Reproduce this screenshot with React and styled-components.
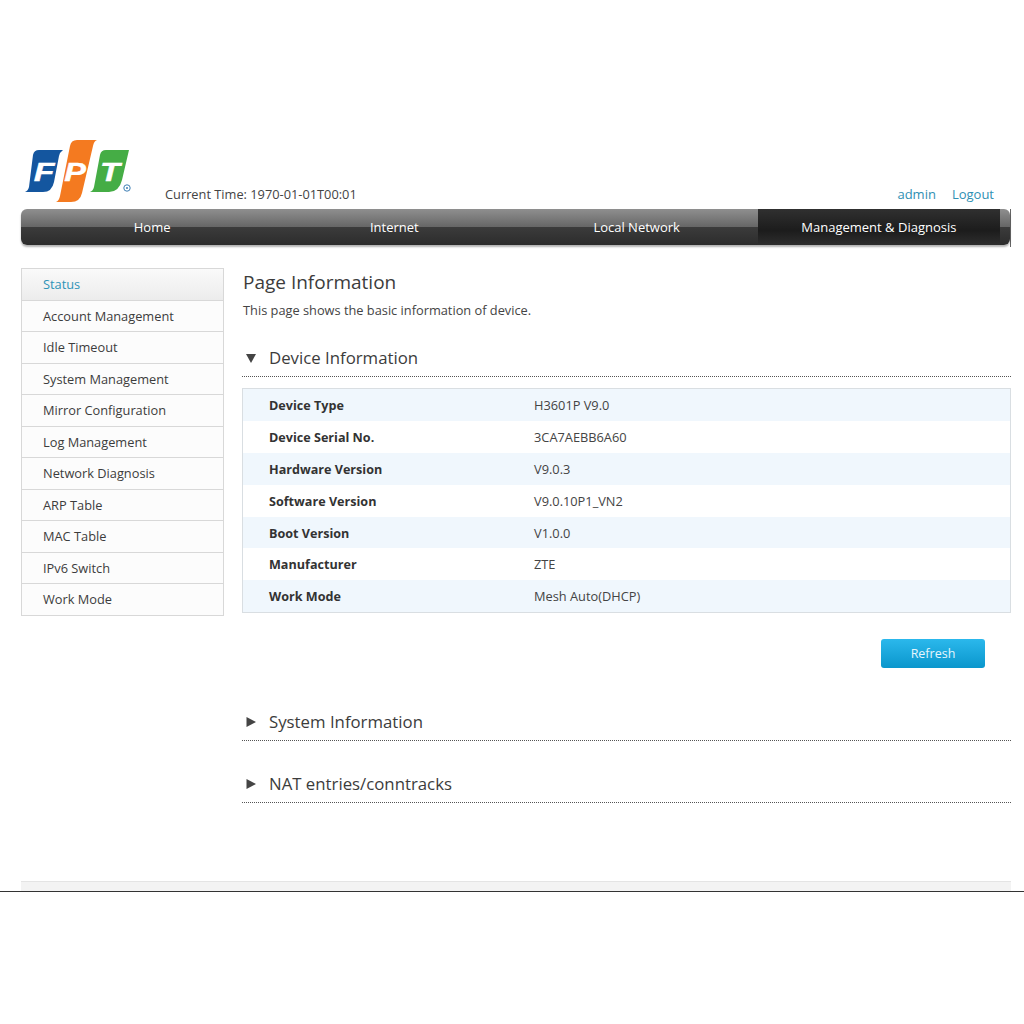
import React from 'react';
import styled, { createGlobalStyle } from 'styled-components';

const GlobalStyle = createGlobalStyle`
    html, body {
        margin: 0;
        padding: 0;
        background: #fff;
    }
    body {
        font-family: "Open Sans", "Noto Sans", "Liberation Sans", sans-serif;
        color: #3c3c3c;
    }
`

const Page = styled.div`
    width: 1024px;
    height: 1024px;
    padding-top: 139px;
    box-sizing: border-box;
    overflow: hidden;
`
const Wrap = styled.div`
    margin: 0 13px 0 21px;
`
const Header = styled.header`
    display: flex;
    align-items: flex-end;
    height: 70px;
`
const Logo = styled.svg`
    width: 112px;
    height: 66px;
    margin: 0 0 5px 3px;
    flex: none;
`
const Time = styled.div`
    margin: 0 0 6px 29px;
    font-size: 12.8px;
    line-height: 18px;
    color: #444;
`
const UserLinks = styled.div`
    margin: 0 17px 6px auto;
    display: flex;
    gap: 16px;
    font-size: 13px;
    line-height: 18px;
    color: #2f8fb3;
`
const NavBar = styled.div`
    height: 38px;
    border-right: 1px solid #666;
    box-sizing: border-box;
`
const Nav = styled.nav`
    display: grid;
    grid-template-columns: repeat(4, 242.25px);
    height: 36px;
    padding: 0 10px;
    border-radius: 6px;
    overflow: hidden;
    background: linear-gradient(#8f8f8f 0, #666 50%, #3b3b3b 51%, #2c2c2c 100%);
    box-shadow: 0 2px 2px rgba(0, 0, 0, 0.3);
`
const NavItem = styled.div`
    display: flex;
    align-items: center;
    justify-content: center;
    font-size: 13px;
    color: #fff;
    background: ${props => props.$active ? 'linear-gradient(#303030 0, #1c1c1c 60%, #2e2e2e 100%)' : 'transparent'};
`
const Main = styled.div`
    display: flex;
    align-items: flex-start;
    gap: 18px;
    margin-top: 21px;
`
const Sidebar = styled.ul`
    list-style: none;
    margin: 0;
    padding: 0;
    width: 203px;
    flex: none;
    box-sizing: border-box;
    border: 1px solid #d8d8d8;
    border-bottom: none;
`
const SideItem = styled.li`
    height: 31.55px;
    box-sizing: border-box;
    padding: 0 0 0.6px 21px;
    display: flex;
    align-items: center;
    font-size: 12.8px;
    border-bottom: 1px solid #d8d8d8;
    color: ${props => props.$active ? '#2f94b8' : '#3c3c3c'};
    background: ${props => props.$active ? 'linear-gradient(#fafafa, #ececec)' : '#fcfcfc'};
`
const Content = styled.main`
    flex: 1;
    min-width: 0;
`
const Title = styled.h1`
    margin: 0;
    padding-left: 1px;
    font-size: 19px;
    font-weight: 400;
    line-height: 28px;
    color: #3c3c3c;
`
const Description = styled.p`
    margin: 5px 0 0;
    padding-left: 1px;
    font-size: 12.8px;
    line-height: 18px;
    color: #444;
`
const Section = styled.div`
    display: flex;
    align-items: center;
    height: 38px;
    box-sizing: border-box;
    margin-top: ${props => props.$top}px;
    border-bottom: 1px dotted #555;
    font-size: 16.8px;
    color: #3c3c3c;
`
const Arrow = styled.svg`
    width: 12px;
    height: 12px;
    margin: 0 12px 0 3px;
    flex: none;
`
const InfoTable = styled.div`
    margin-top: 11px;
    border: 1px solid #d9dee2;
`
const Row = styled.div`
    display: flex;
    align-items: baseline;
    height: 31.9px;
    line-height: 33px;
    padding-left: 26px;
    font-size: 12.6px;
    background: ${props => props.$odd ? '#f0f7fd' : '#fff'};
`
const Label = styled.div`
    width: 265px;
    flex: none;
    font-weight: 700;
    color: #333;
`
const Value = styled.div`
    font-size: 12.8px;
    color: #444;
`
const Actions = styled.div`
    display: flex;
    justify-content: flex-end;
    margin-top: 26px;
    padding-right: 26px;
`
const Refresh = styled.button`
    width: 104px;
    height: 29px;
    padding: 0;
    border: none;
    border-radius: 3px;
    font-family: inherit;
    font-size: 12.5px;
    color: #e6f6fd;
    background: linear-gradient(#2bb8ec, #0a96cc);
`
const Footer = styled.div`
    height: 10px;
    margin-top: 78px;
    box-sizing: border-box;
    background: #f3f3f3;
    border-top: 1px solid #e4e4e4;
`
const Rule = styled.div`
    height: 1px;
    background: #333;
`

const menu = [
    'Status',
    'Account Management',
    'Idle Timeout',
    'System Management',
    'Mirror Configuration',
    'Log Management',
    'Network Diagnosis',
    'ARP Table',
    'MAC Table',
    'IPv6 Switch',
    'Work Mode'
]

const rows = [
    ['Device Type', 'H3601P V9.0'],
    ['Device Serial No.', '3CA7AEBB6A60'],
    ['Hardware Version', 'V9.0.3'],
    ['Software Version', 'V9.0.10P1_VN2'],
    ['Boot Version', 'V1.0.0'],
    ['Manufacturer', 'ZTE'],
    ['Work Mode', 'Mesh Auto(DHCP)']
]

const tabs = ['Home', 'Internet', 'Local Network', 'Management & Diagnosis']

function FptLogo() {
    const letter = {
        fill: '#fff',
        stroke: '#fff',
        strokeWidth: 0.4,
        fontFamily: '"Liberation Sans", sans-serif',
        fontWeight: 700,
        fontStyle: 'italic',
        fontSize: 26,
        textAnchor: 'middle'
    }
    return (
        <Logo viewBox="0 0 112 66">
            <path d="M9 17 Q10 12 15 12 L39 12 Q36 14 35 18 L30 44 Q28 54 19 54 L1 54 Q4 53 5 49 Z" fill="#14569f" />
            <path d="M46 8 Q47 2 53 2 L73 2 Q70 3 69 8 L58 55 Q56 64 47 64 L32 64 Q35 63 36 58 Z" fill="#f47a20" />
            <path d="M76 17 Q77 12 82 12 L105 12 L98 42 Q95 54 85 54 L66 54 Q69 53 70 49 Z" fill="#45ad45" />
            <text transform="translate(20 43) scale(1.3 1)" style={letter}>F</text>
            <text transform="translate(51 43) scale(1.25 1)" style={letter}>P</text>
            <text transform="translate(86 43) scale(1.25 1)" style={letter}>T</text>
            <circle cx="103" cy="50" r="3.2" fill="none" stroke="#3f7fb5" strokeWidth="1" />
            <circle cx="103" cy="50" r="1" fill="#3f7fb5" />
        </Logo>
    )
}

function Caret({ open }) {
    return (
        <Arrow viewBox="0 0 12 12">
            {open
                ? <path d="M1 2 L11 2 L6 11 Z" fill="#444" />
                : <path d="M1.5 1 L11 6 L1.5 11 Z" fill="#444" />}
        </Arrow>
    )
}

export default function App() {
    return (
        <Page>
            <GlobalStyle />
            <Wrap>
                <Header>
                    <FptLogo />
                    <Time>Current Time: 1970-01-01T00:01</Time>
                    <UserLinks>
                        <span>admin</span>
                        <span>Logout</span>
                    </UserLinks>
                </Header>
                <NavBar>
                    <Nav>
                        {tabs.map((tab, i) => (
                            <NavItem key={tab} $active={i === 3}>{tab}</NavItem>
                        ))}
                    </Nav>
                </NavBar>
                <Main>
                    <Sidebar>
                        {menu.map((item, i) => (
                            <SideItem key={item} $active={i === 0}>{item}</SideItem>
                        ))}
                    </Sidebar>
                    <Content>
                        <Title>Page Information</Title>
                        <Description>This page shows the basic information of device.</Description>
                        <Section $top={20}><Caret open />Device Information</Section>
                        <InfoTable>
                            {rows.map(([label, value], i) => (
                                <Row key={label} $odd={i % 2 === 0}>
                                    <Label>{label}</Label>
                                    <Value>{value}</Value>
                                </Row>
                            ))}
                        </InfoTable>
                        <Actions><Refresh>Refresh</Refresh></Actions>
                        <Section $top={35}><Caret />System Information</Section>
                        <Section $top={24}><Caret />NAT entries/conntracks</Section>
                    </Content>
                </Main>
                <Footer />
            </Wrap>
            <Rule />
        </Page>
    )
}
